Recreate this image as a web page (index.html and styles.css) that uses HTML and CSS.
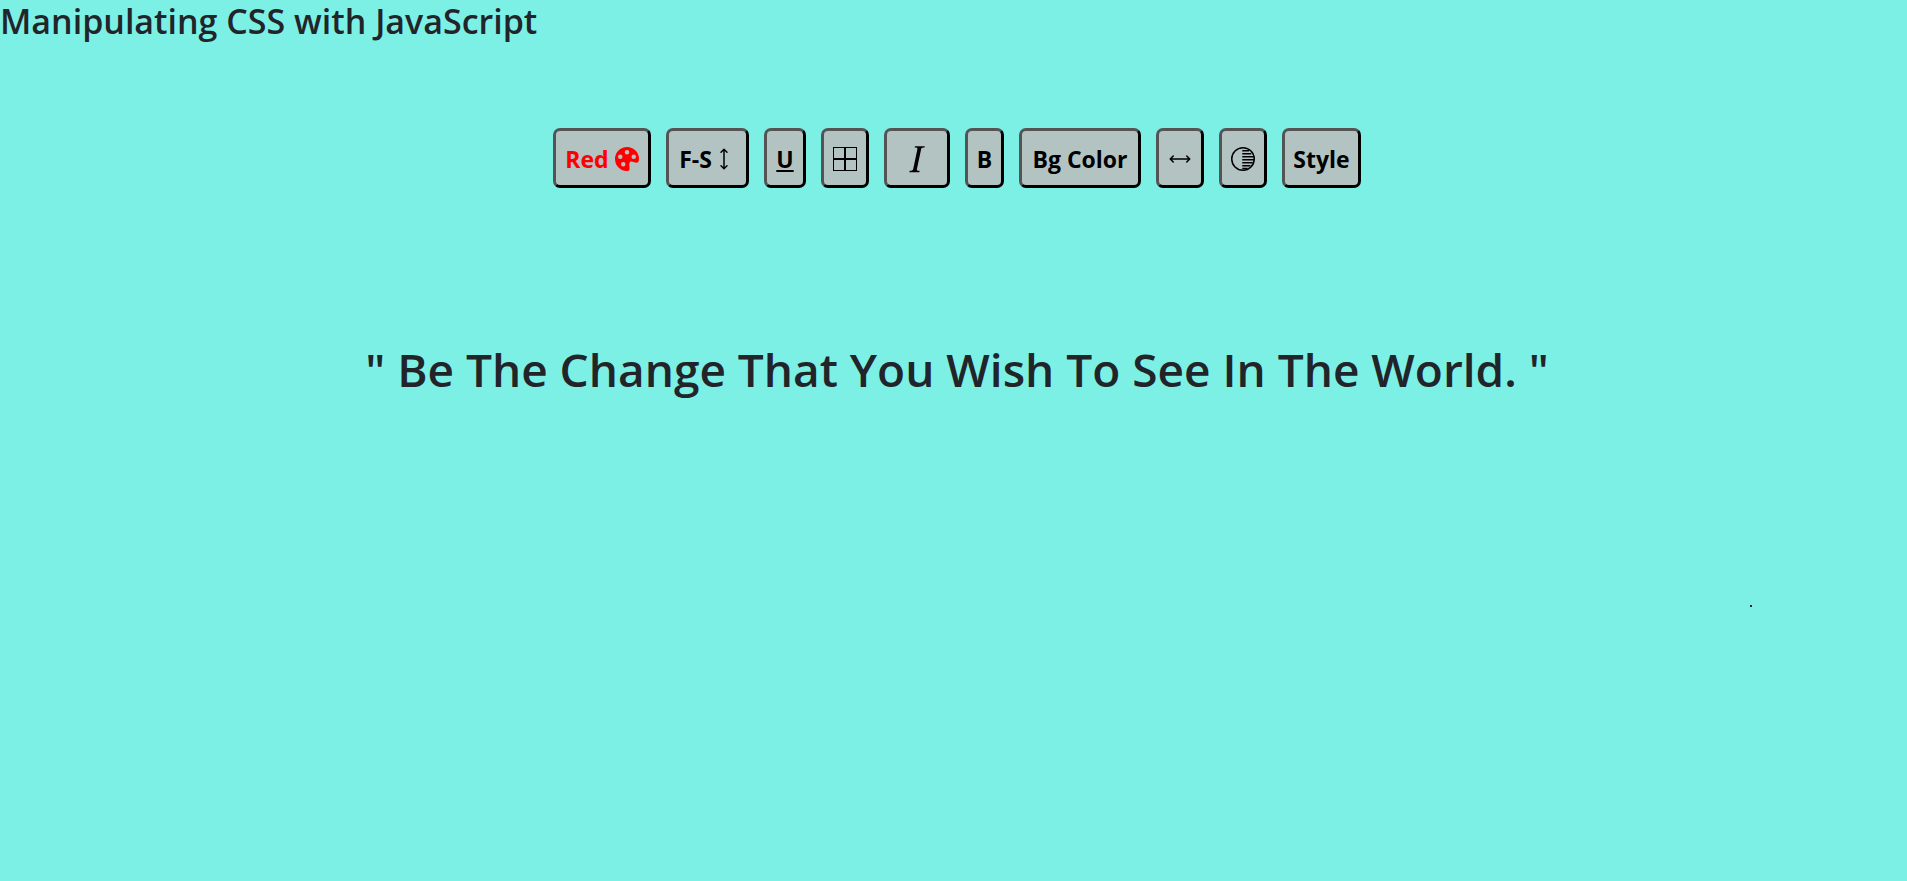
FILE: index.html
```html
<!DOCTYPE html>
<html lang="en">
<head>
<meta charset="utf-8">
<title>Manipulating CSS with JavaScript</title>
<link rel="stylesheet" href="styles.css">
</head>
<body>
<h2 class="title">Manipulating CSS with JavaScript</h2>
<div class="toolbar">
  <button class="tool tool-red" type="button">Red <svg class="icon" viewBox="0 0 16 16"><path d="M12.433 10.07C14.133 10.585 16 11.15 16 8a8 8 0 1 0-8 8c1.996 0 1.826-1.504 1.649-3.08-.124-1.101-.252-2.237.351-2.92.465-.527 1.42-.237 2.433.07M8 5a1.5 1.5 0 1 1 0-3 1.5 1.5 0 0 1 0 3m4.5 3a1.5 1.5 0 1 1 0-3 1.5 1.5 0 0 1 0 3M5 6.5a1.5 1.5 0 1 1-3 0 1.5 1.5 0 0 1 3 0m.5 6.5a1.5 1.5 0 1 1 0-3 1.5 1.5 0 0 1 0 3"/></svg></button>
  <button class="tool tool-size" type="button">F-S<svg class="icon" viewBox="0 0 16 16"><path d="M8.354 14.854a.5.5 0 0 1-.708 0l-2-2a.5.5 0 0 1 .708-.708L7.5 13.293V2.707L6.354 3.854a.5.5 0 1 1-.708-.708l2-2a.5.5 0 0 1 .708 0l2 2a.5.5 0 0 1-.708.708L8.5 2.707v10.586l1.146-1.147a.5.5 0 0 1 .708.708z"/></svg></button>
  <button class="tool tool-underline" type="button">U</button>
  <button class="tool" type="button" aria-label="Border"><svg class="icon" viewBox="0 0 24 24"><path fill-rule="evenodd" d="M0 0h24v24H0zM1 1v10h10V1zM13 1v10h10V1zM1 13v10h10V13zM13 13v10h10V13z"/></svg></button>
  <button class="tool" type="button" aria-label="Italic"><svg class="icon icon-large" viewBox="0 0 16 16"><path d="M7.991 11.674 9.53 4.455c.123-.595.246-.71 1.347-.807l.11-.52H7.211l-.11.52c1.06.096 1.128.212 1.005.807L6.57 11.674c-.123.595-.246.71-1.346.806l-.11.52h3.774l.11-.52c-1.06-.095-1.129-.211-1.006-.806z"/></svg></button>
  <button class="tool tool-bold" type="button">B</button>
  <button class="tool tool-background" type="button">Bg Color</button>
  <button class="tool" type="button" aria-label="Width"><svg class="icon" viewBox="0 0 16 16"><path d="M1.146 8.354a.5.5 0 0 1 0-.708l2-2a.5.5 0 1 1 .708.708L2.707 7.5h10.586l-1.147-1.146a.5.5 0 0 1 .708-.708l2 2a.5.5 0 0 1 0 .708l-2 2a.5.5 0 0 1-.708-.708L13.293 8.5H2.707l1.147 1.146a.5.5 0 0 1-.708.708z"/></svg></button>
  <button class="tool" type="button" aria-label="Shadow"><svg class="icon icon-line" viewBox="0 0 16 16"><circle cx="8" cy="8" r="7.5"/><path d="M7.5 2.500H12M7.500 4.500h6M7.500 6.500h7.500M7.500 8.500h8M7.500 10.500h7M7.500 12.500h5.500M7.500 14.300H11"/></svg></button>
  <button class="tool tool-style" type="button">Style</button>
</div>
<h1 class="quote">" Be The Change That You Wish To See In The World. "</h1>
<div class="marker-row"><span class="marker"></span></div>
</body>
</html>
```
FILE: styles.css
```css
* { box-sizing: border-box; }
body {
  margin: 0;
  background: #7df0e6;
  color: #212529;
  font-family: "Segoe UI", "Open Sans", "Noto Sans", sans-serif;
}
.title {
  margin: 0;
  font-size: 34px;
  line-height: 42px;
  font-weight: 600;
}
.toolbar {
  display: flex;
  justify-content: center;
  gap: 15px;
  margin-top: 86px;
  padding-left: 7px;
}
.tool {
  display: flex;
  align-items: center;
  justify-content: center;
  gap: 6px;
  height: 60px;
  padding: 2px 9px 0;
  border: 3px outset #000;
  border-radius: 7px;
  background: #b3c3c2;
  color: #000;
  font-family: inherit;
  font-size: 23px;
  font-weight: 700;
}
.tool-red { width: 98px; color: #f00; }
.tool-size { width: 83px; gap: 0; }
.tool-underline { width: 42px; text-decoration: underline; }
.tool-bold { width: 39px; }
.tool-background { width: 122px; }
.tool-style { width: 79px; }
.icon { flex: none; width: 24px; height: 24px; fill: currentColor; }
.icon-large { width: 42px; height: 42px; }
.icon-line { fill: none; stroke: currentColor; }
.quote {
  margin: 150px 0 0;
  padding-left: 7px;
  text-align: center;
  font-size: 46px;
  line-height: 62px;
  font-weight: 600;
}
.marker-row {
  display: flex;
  justify-content: flex-end;
  margin-top: 205px;
  padding-right: 155px;
}
.marker {
  width: 2px;
  height: 2px;
  background: #212529;
}
```
